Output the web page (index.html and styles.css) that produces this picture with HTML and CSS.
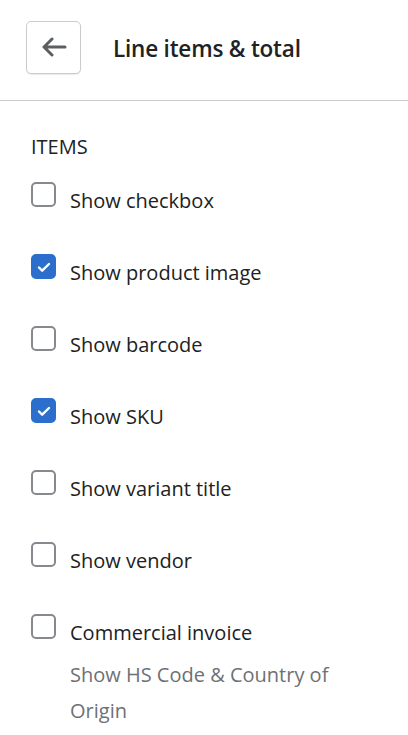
FILE: index.html
```html
<!DOCTYPE html>
<html>
<head>
    <title>Line items &amp; total</title>
    <meta charset="UTF-8">
    <link rel="stylesheet" href="styles.css">
</head>
<body>
    <div class="header">
        <button class="back-btn" aria-label="Back">
            <svg width="26" height="20" viewBox="0 0 26 20">
                <path d="M24 10H3M11 2L3 10l8 8" fill="none" stroke="#5c5f62" stroke-width="3" stroke-linecap="round" stroke-linejoin="round"/>
            </svg>
        </button>
        <h1>Line items &amp; total</h1>
    </div>

    <div class="section">
        <h2>ITEMS</h2>

        <div class="option">
            <span class="box"></span>
            <span class="label">Show checkbox</span>
        </div>
        <div class="option">
            <span class="box checked"><svg width="16" height="16" viewBox="0 0 16 16"><path d="M3 8.5l3.2 3.2L13 5" fill="none" stroke="#fff" stroke-width="2.4" stroke-linecap="round" stroke-linejoin="round"/></svg></span>
            <span class="label">Show product image</span>
        </div>
        <div class="option">
            <span class="box"></span>
            <span class="label">Show barcode</span>
        </div>
        <div class="option">
            <span class="box checked"><svg width="16" height="16" viewBox="0 0 16 16"><path d="M3 8.5l3.2 3.2L13 5" fill="none" stroke="#fff" stroke-width="2.4" stroke-linecap="round" stroke-linejoin="round"/></svg></span>
            <span class="label">Show SKU</span>
        </div>
        <div class="option">
            <span class="box"></span>
            <span class="label">Show variant title</span>
        </div>
        <div class="option">
            <span class="box"></span>
            <span class="label">Show vendor</span>
        </div>
        <div class="option">
            <span class="box"></span>
            <div>
                <span class="label">Commercial invoice</span>
                <p class="help">Show HS Code &amp; Country of Origin</p>
            </div>
        </div>
    </div>
</body>
</html>
```

FILE: styles.css
```css
body {
    margin: 0;
    background-color: #fff;
    font-family: "Open Sans", "Noto Sans", sans-serif;
    color: #202223;
}

.header {
    display: flex;
    align-items: center;
    height: 100px;
    padding-left: 26px;
    border-bottom: 1px solid #c9cccf;
}

.back-btn {
    width: 55px;
    height: 53px;
    display: flex;
    align-items: center;
    justify-content: center;
    background: #fff;
    border: 1px solid #c9cccf;
    border-radius: 5px;
    box-shadow: 0 1px 1px rgba(0, 0, 0, 0.08);
    padding: 0;
    margin-top: -6px;
}

h1 {
    margin: -4px 0 0 32px;
    font-size: 22.5px;
    font-weight: 600;
    letter-spacing: -0.2px;
}

.section {
    padding: 32px 30px 0 31px;
}

h2 {
    margin: 0 0 18px 0;
    font-size: 20px;
    font-weight: 500;
    color: #202223;
    line-height: 28px;
}

.option {
    display: flex;
    align-items: flex-start;
    margin-bottom: 32px;
}

.box {
    flex: none;
    width: 21px;
    height: 21px;
    border: 2.5px solid #868a8f;
    border-radius: 5px;
    margin-top: 3px;
    display: flex;
    align-items: center;
    justify-content: center;
}

.box.checked {
    border-color: #2c6ecb;
    background-color: #2c6ecb;
}

.label {
    display: block;
    margin-left: 14px;
    padding-top: 4px;
    font-size: 20px;
    line-height: 36px;
    color: #202223;
}

.help {
    margin: 6px 0 0 14px;
    max-width: 275px;
    font-size: 20px;
    line-height: 36px;
    color: #6d7175;
}
```
